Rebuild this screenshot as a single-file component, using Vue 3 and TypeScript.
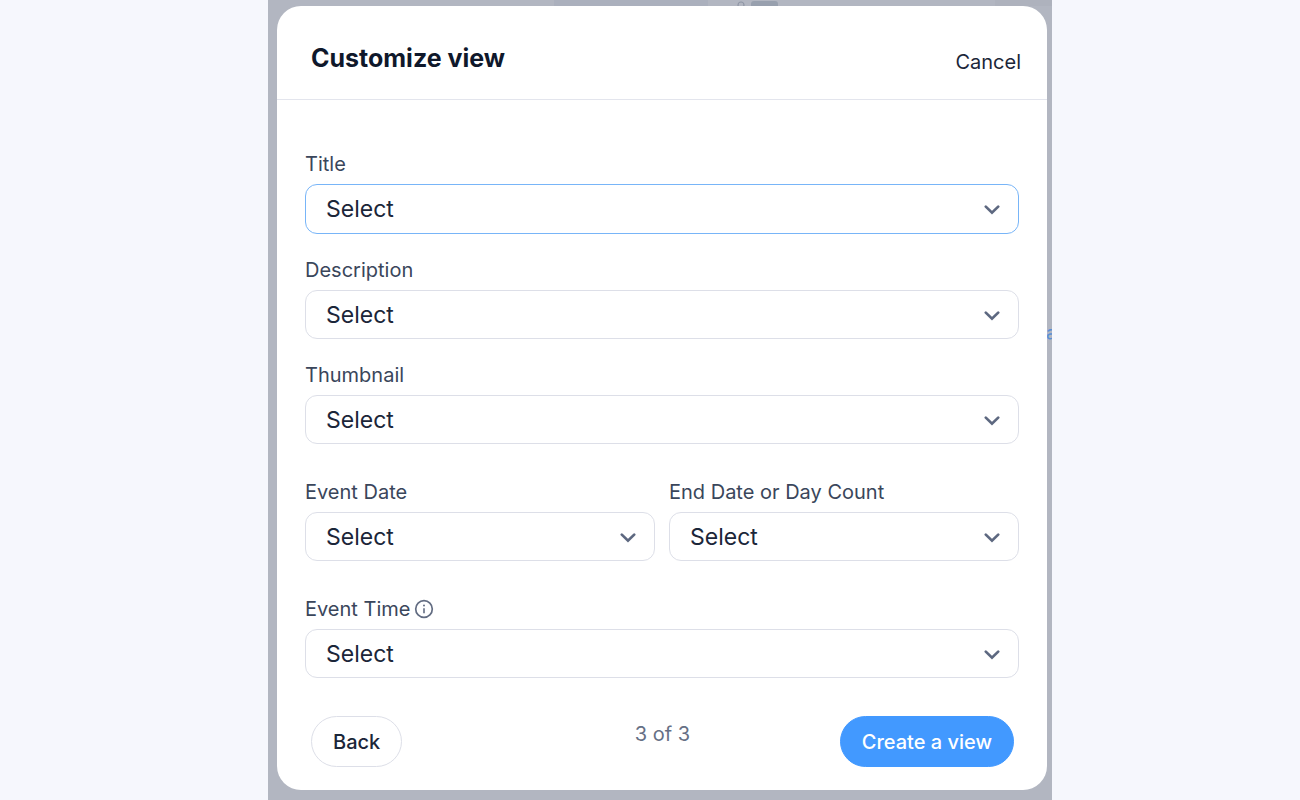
<script setup lang="ts">
import { reactive } from 'vue'

interface Field {
  id: string
  label: string
  info?: boolean
}

const rows: Field[][] = [
  [{ id: 'title', label: 'Title' }],
  [{ id: 'description', label: 'Description' }],
  [{ id: 'thumbnail', label: 'Thumbnail' }],
  [
    { id: 'event-date', label: 'Event Date' },
    { id: 'end-date', label: 'End Date or Day Count' },
  ],
  [{ id: 'event-time', label: 'Event Time', info: true }],
]

const values = reactive<Record<string, string>>({})
rows.flat().forEach((field) => (values[field.id] = ''))
</script>

<template>
  <div class="page">
    <div class="backdrop">
      <div class="behind" aria-hidden="true">
        <span class="panel"></span>
        <span class="edge"></span>
        <svg class="ring" width="8" height="8" viewBox="0 0 8 8"><circle cx="4" cy="5" r="3" fill="none" stroke="#8f96a5" stroke-width="1.2" /></svg>
        <span class="chip"></span>
        <span class="letter">a</span>
      </div>
      <main class="modal" role="dialog" aria-labelledby="heading">
        <header class="header">
          <h1 id="heading">Customize view</h1>
          <button type="button" class="cancel">Cancel</button>
        </header>
        <form class="form" @submit.prevent>
          <div class="fields">
            <div v-for="(row, i) in rows" :key="i" class="row" :class="{ spaced: i > 2 }">
              <div v-for="field in row" :key="field.id" class="field">
                <label :for="field.id">
                  {{ field.label }}
                  <svg v-if="field.info" class="info" width="20" height="20" viewBox="0 0 20 20" fill="none">
                    <circle cx="10" cy="10" r="8.3" stroke="#626c82" stroke-width="1.7" />
                    <path d="M10 9.2v5" stroke="#626c82" stroke-width="1.6" />
                    <circle cx="10" cy="6.5" r="1" fill="#626c82" />
                  </svg>
                </label>
                <div class="control">
                  <select :id="field.id" v-model="values[field.id]" :class="{ active: field.id === 'title' }">
                    <option value="">Select</option>
                  </select>
                  <svg class="chevron" width="16" height="10" viewBox="0 0 16 10" fill="none">
                    <path d="M1.8 1.6 8 7.7 14.2 1.6" stroke="#5d6880" stroke-width="2.7" stroke-linecap="round" />
                  </svg>
                </div>
              </div>
            </div>
          </div>
          <footer class="footer">
            <div class="side"><button type="button" class="btn back">Back</button></div>
            <span class="step">3 of 3</span>
            <div class="side end"><button type="submit" class="btn create">Create a view</button></div>
          </footer>
        </form>
      </main>
    </div>
  </div>
</template>

<style>
body {
  margin: 0;
  background: #f6f7fd;
}
</style>

<style scoped>
.page {
  display: flex;
  justify-content: center;
  min-height: 100vh;
  padding-left: 20px;
  box-sizing: border-box;
  font-family: Inter, "Liberation Sans", sans-serif;
  background: #f6f7fd;
}
.backdrop {
  position: relative;
  width: 100%;
  max-width: 784px;
  box-sizing: border-box;
  padding: 6px 5px 10px 9px;
  background: #b2b6c1;
}
.behind {
  position: absolute;
  inset: 0;
  overflow: hidden;
}
.behind > * {
  position: absolute;
}
.panel {
  left: 286px;
  top: 0;
  width: 154px;
  height: 6px;
  background: #abb0bd;
}
.edge {
  right: 0;
  top: 0;
  width: 57px;
  height: 6px;
  background: #aeb2bd;
}
.ring {
  left: 469px;
  top: 0;
}
.chip {
  left: 483px;
  top: 1px;
  width: 27px;
  height: 8px;
  border-radius: 3px;
  background: #98a0ae;
}
.letter {
  right: -4px;
  top: 322px;
  font-size: 18px;
  line-height: 22px;
  color: #5b8fd6;
}
.modal {
  position: relative;
  background: #fff;
  border-radius: 24px;
}
.header {
  display: flex;
  align-items: center;
  justify-content: space-between;
  height: 94px;
  box-sizing: border-box;
  padding: 10px 26px 0 34px;
  border-bottom: 1px solid #e3e5ed;
}
h1 {
  margin: 0;
  font-size: 25px;
  line-height: 32px;
  font-weight: 700;
  color: #0f182b;
}
button,
select {
  font-family: inherit;
  cursor: pointer;
}
.cancel {
  margin-top: 8px;
  padding: 0;
  border: 0;
  background: none;
  font-size: 20px;
  line-height: 24px;
  color: #1b2639;
}
.form {
  padding: 52px 0 23px;
}
.fields {
  display: flex;
  flex-direction: column;
  gap: 24px;
  padding: 0 28px;
}
.row {
  display: flex;
  gap: 14px;
}
.spaced {
  margin-top: 12px;
}
.field {
  display: flex;
  flex: 1;
  flex-direction: column;
  gap: 8px;
  min-width: 0;
}
label {
  display: flex;
  align-items: center;
  gap: 4px;
  font-size: 20px;
  line-height: 24px;
  color: #3a465b;
}
.control {
  position: relative;
}
select {
  display: block;
  width: 100%;
  height: 49px;
  padding: 0 48px 0 20px;
  appearance: none;
  border: 1px solid #dddfe8;
  border-radius: 12px;
  outline: none;
  background: #fff;
  font-size: 23px;
  line-height: 28px;
  color: #1b2639;
}
select.active,
select:focus {
  height: 50px;
  border-color: #78b5f8;
}
.chevron {
  position: absolute;
  right: 19px;
  top: 21px;
  pointer-events: none;
}
.footer {
  display: flex;
  align-items: flex-start;
  margin-top: 38px;
  padding: 0 33px 0 34px;
}
.side {
  display: flex;
  flex: 1;
}
.end {
  justify-content: flex-end;
}
.step {
  padding-top: 6px;
  font-size: 20px;
  line-height: 24px;
  color: #667085;
}
.btn {
  height: 51px;
  padding: 0 21px;
  border: 1px solid #dddfe8;
  border-radius: 26px;
  background: #fff;
  font-size: 20px;
  line-height: 24px;
  font-weight: 500;
  color: #1b2639;
}
.create {
  border-color: #4299ff;
  background: #4299ff;
  color: #fff;
}
</style>
